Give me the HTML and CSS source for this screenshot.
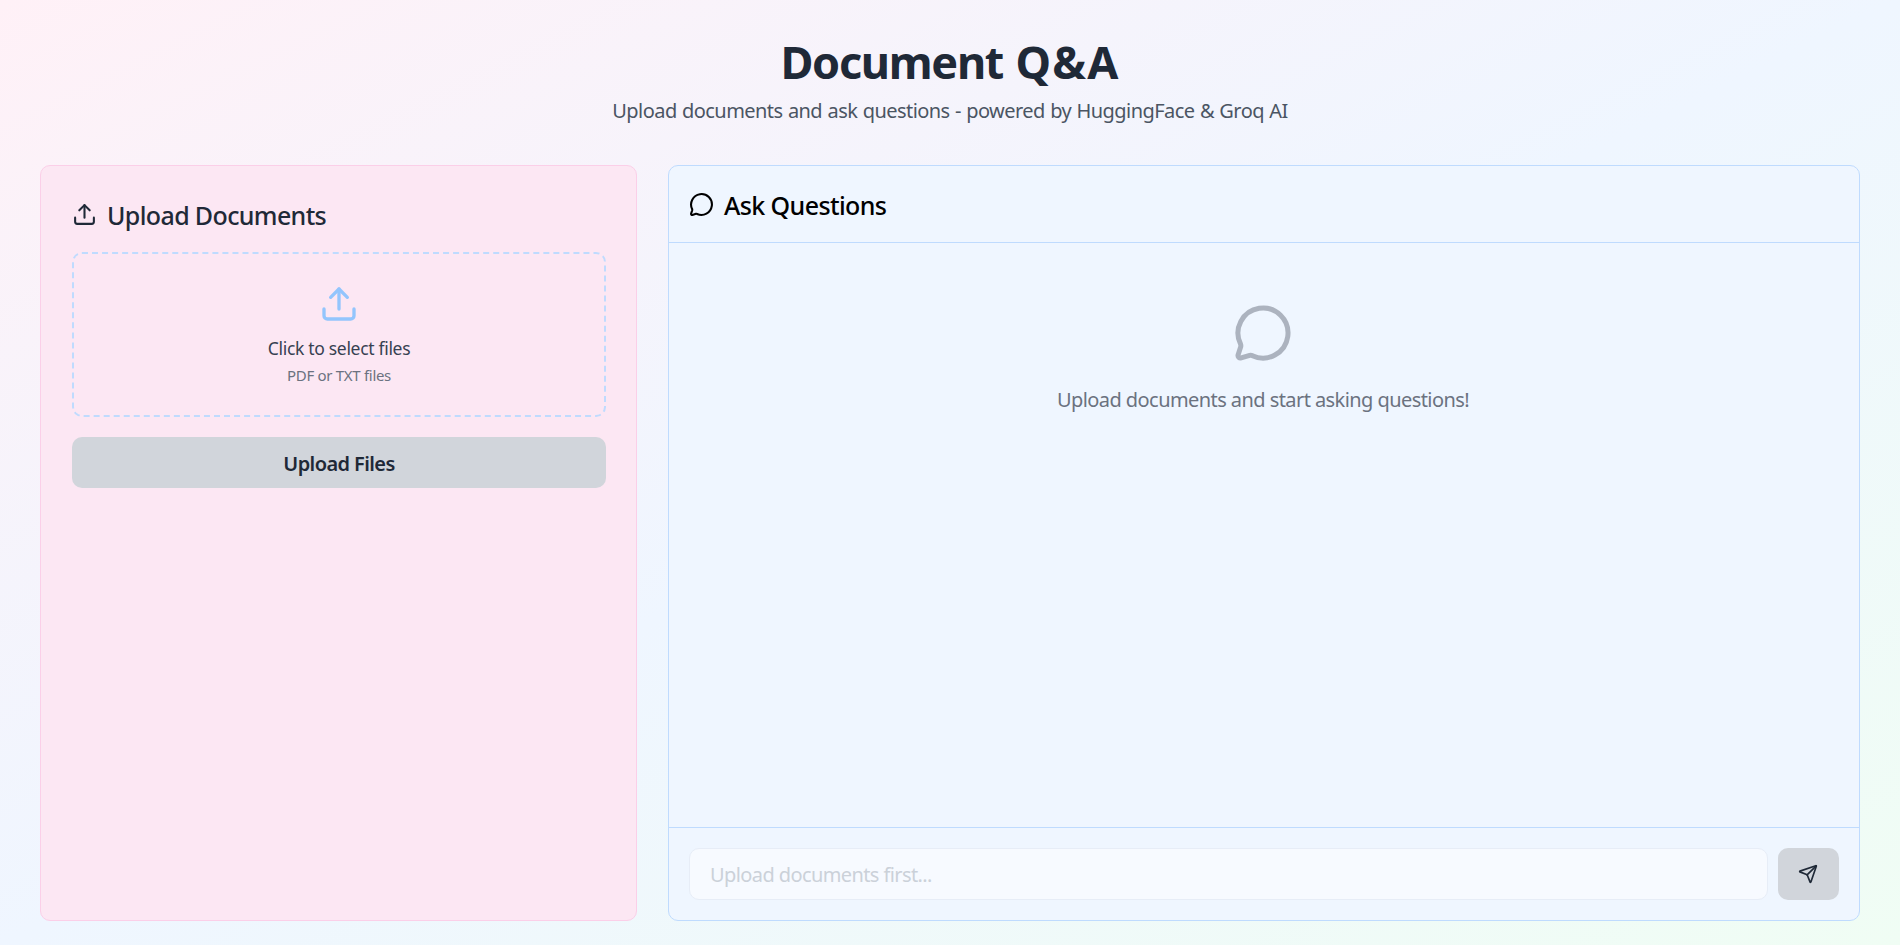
FILE: index.html
```html
<!DOCTYPE html>
<html lang="en">
<head>
<meta charset="utf-8">
<title>Document Q&amp;A</title>
<link rel="stylesheet" href="styles.css">
</head>
<body>
<div class="page">
  <header class="header">
    <h1 class="title">Document <span class="title-accent">Q&amp;A</span></h1>
    <p class="subtitle"><span>Upload documents and ask questions - powered by HuggingFace &amp; Groq AI</span></p>
  </header>
  <main class="panels">
    <section class="upload">
      <h2 class="heading upload-heading">
        <svg class="icon heading-icon" viewBox="0 0 24 24"><path d="M21 15v4a2 2 0 0 1-2 2H5a2 2 0 0 1-2-2v-4"/><path d="m17 8-5-5-5 5"/><path d="M12 3v12"/></svg>
        <span>Upload Documents</span>
      </h2>
      <div class="dropzone">
        <svg class="icon drop-icon" viewBox="0 0 24 24"><path d="M21 15v4a2 2 0 0 1-2 2H5a2 2 0 0 1-2-2v-4"/><path d="m17 8-5-5-5 5"/><path d="M12 3v12"/></svg>
        <span class="drop-label">Click to select files</span>
        <span class="drop-hint">PDF or TXT files</span>
      </div>
      <button class="upload-button" disabled><span>Upload Files</span></button>
    </section>
    <section class="chat">
      <div class="chat-header">
        <h2 class="heading chat-heading">
          <svg class="icon heading-icon" viewBox="0 0 24 24"><path d="M2.992 16.342a2 2 0 0 1 .094 1.167l-1.065 3.29a1 1 0 0 0 1.236 1.168l3.413-.998a2 2 0 0 1 1.099.092 10 10 0 1 0-4.777-4.719"/></svg>
          <span>Ask Questions</span>
        </h2>
      </div>
      <div class="messages">
        <svg class="icon empty-icon" viewBox="0 0 24 24"><path d="M2.992 16.342a2 2 0 0 1 .094 1.167l-1.065 3.29a1 1 0 0 0 1.236 1.168l3.413-.998a2 2 0 0 1 1.099.092 10 10 0 1 0-4.777-4.719"/></svg>
        <p class="empty-text"><span>Upload documents and start asking questions!</span></p>
      </div>
      <div class="composer">
        <div class="input"><span>Upload documents first...</span></div>
        <button class="send" disabled aria-label="Send">
          <svg class="icon send-icon" viewBox="0 0 24 24"><path d="M14.536 21.686a.5.5 0 0 0 .937-.024l6.5-19a.496.496 0 0 0-.635-.635l-19 6.5a.5.5 0 0 0-.024.937l7.93 3.18a2 2 0 0 1 1.112 1.11z"/><path d="m21.854 2.147-10.94 10.939"/></svg>
        </button>
      </div>
    </section>
  </main>
</div>
</body>
</html>
```

FILE: styles.css
```css
* { box-sizing: border-box; margin: 0; }
body {
  font-family: "Segoe UI", "Noto Sans", "Open Sans", sans-serif;
  color: #000;
}
.page {
  display: flex;
  flex-direction: column;
  height: 945px;
  padding: 35px 40px 24px;
  background: linear-gradient(to bottom right, #fff1f7, #eff6ff 50%, #f0fdf4);
}
.header { height: 130px; text-align: center; white-space: nowrap; }
.title { font-size: 45px; line-height: 53px; font-weight: 700; color: #1f2937; letter-spacing: -1.3px; word-spacing: 2px; }
.title-accent { letter-spacing: 1.2px; }
.subtitle { margin-top: 8px; font-size: 20px; line-height: 30px; color: #4b5563; letter-spacing: -0.55px; word-spacing: 0.7px; }
.panels { display: grid; grid-template-columns: 597px 1fr; gap: 31px; height: 756px; }
.upload {
  padding: 30px 30px 30px 31px;
  background: #fce7f3;
  border: 1px solid #fbcfe8;
  border-radius: 10px;
}
.heading {
  display: flex;
  align-items: center;
  gap: 10px;
  font-size: 25px;
  line-height: 38px;
  font-weight: 500;
  white-space: nowrap;
}
.icon {
  flex: none;
  width: 25px;
  height: 25px;
  fill: none;
  stroke: currentColor;
  stroke-width: 2;
  stroke-linecap: round;
  stroke-linejoin: round;
}
.heading-icon { margin-bottom: 2px; }
.upload-heading { color: #1f2937; margin-bottom: 18px; letter-spacing: -0.63px; }
.dropzone {
  display: flex;
  flex-direction: column;
  align-items: center;
  height: 165px;
  padding: 30px 0;
  border: 2px dashed #bfdbfe;
  border-radius: 10px;
}
.drop-icon { width: 40px; height: 40px; color: #93c5fd; }
.drop-label { margin-top: 10px; font-size: 17.5px; line-height: 28px; color: #374151; letter-spacing: -0.31px; }
.drop-hint { font-size: 15px; line-height: 26px; color: #6b7280; letter-spacing: -0.3px; }
.upload-button {
  width: 100%;
  height: 51px;
  margin-top: 20px;
  padding: 2px 0 0;
  border: 0;
  border-radius: 10px;
  background: #d1d5db;
  color: #1f2937;
  font: 600 20px/30px "Segoe UI", "Noto Sans", "Open Sans", sans-serif;
  letter-spacing: -0.6px;
}
.chat {
  display: flex;
  flex-direction: column;
  background: #eff6ff;
  border: 1px solid #bfdbfe;
  border-radius: 10px;
}
.chat-header { height: 77px; padding: 20px; border-bottom: 1px solid #bfdbfe; }
.chat-heading { letter-spacing: -0.6px; }
.messages { flex: 1; display: flex; flex-direction: column; align-items: center; padding: 60px 2px 0 0; }
.empty-icon { width: 60px; height: 60px; color: #6b7280; opacity: 0.5; }
.empty-text { margin-top: 22px; font-size: 20px; line-height: 30px; color: #6b7280; letter-spacing: -0.57px; }
.composer { display: flex; gap: 10px; height: 93px; padding: 20px; border-top: 1px solid #bfdbfe; }
.input {
  flex: 1;
  height: 52px;
  padding: 11px 20px;
  border: 1px solid #e7edf7;
  border-radius: 10px;
  background: #f7faff;
  color: #cbd1d9;
  font-size: 20px;
  line-height: 30px;
  letter-spacing: -0.6px;
}
.send {
  display: flex;
  align-items: center;
  justify-content: center;
  width: 61px;
  height: 52px;
  padding: 0 2px 0 0;
  border: 0;
  border-radius: 10px;
  background: #d1d5db;
  color: #1f2937;
}
.send-icon { width: 20px; height: 20px; }
```
